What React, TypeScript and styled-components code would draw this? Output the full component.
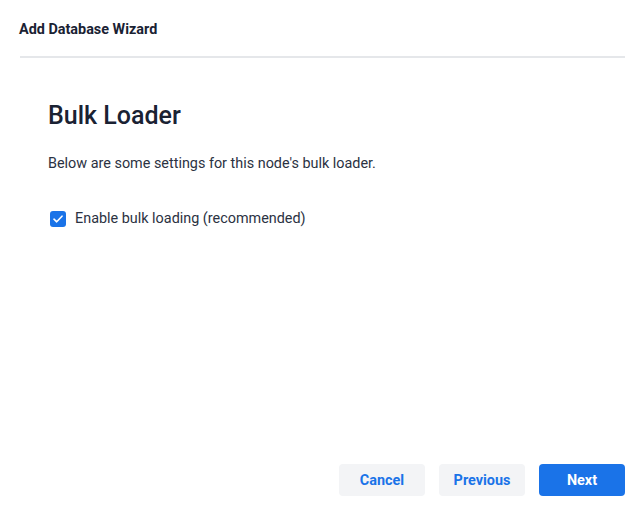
import React, { useState } from 'react'
import styled, { createGlobalStyle } from 'styled-components'

const GlobalStyle = createGlobalStyle`
  html, body {
    margin: 0;
    padding: 0;
    background: #ffffff;
  }
  body {
    font-family: Roboto, "Noto Sans", "Liberation Sans", sans-serif;
    color: #1a2233;
  }
`

const Wrapper = styled.div`
  width: 644px;
  height: 519px;
  padding: 0 19px 0 20px;
  box-sizing: border-box;
  display: flex;
  flex-direction: column;
`

const Header = styled.header`
  height: 54px;
  display: flex;
  align-items: center;
  border-bottom: solid 2px #e5e7ea;
  padding-top: 2px;
  box-sizing: content-box;
`

const HeaderTitle = styled.h1`
  margin: 0 0 0 -1px;
  font-size: 14.4px;
  font-weight: 700;
  color: #1a2233;
`

const Body = styled.main`
  flex: 1;
  padding: 42px 28px 0;
`

const Title = styled.h2`
  margin: 0;
  font-size: 25px;
  font-weight: 500;
  line-height: 32px;
  color: #1a2233;
`

const Description = styled.p`
  margin: 22px 0 0;
  font-size: 14.4px;
  line-height: 20px;
  color: #2b3242;
`

const CheckRow = styled.label`
  margin-top: 35px;
  display: flex;
  align-items: center;
  gap: 9px;
  padding-left: 2px;
  font-size: 14.4px;
  line-height: 20px;
  color: #2b3242;
  cursor: pointer;
`

const Box = styled.span<{ checked: boolean }>`
  width: 16px;
  height: 16px;
  border-radius: 3px;
  box-sizing: border-box;
  display: flex;
  align-items: center;
  justify-content: center;
  background: ${({ checked }) => (checked ? '#1a73e8' : '#ffffff')};
  border: ${({ checked }) => (checked ? 'none' : 'solid 1px #9aa1ab')};
`

const Footer = styled.footer`
  display: flex;
  justify-content: flex-end;
  gap: 14px;
  padding-bottom: 23px;
`

const Button = styled.button<{ primary?: boolean }>`
  width: 86px;
  height: 32px;
  border: none;
  border-radius: 4px;
  font-family: inherit;
  font-size: 14.4px;
  font-weight: 700;
  cursor: pointer;
  color: ${({ primary }) => (primary ? '#ffffff' : '#1a73e8')};
  background: ${({ primary }) => (primary ? '#1a73e8' : '#f3f4f6')};
`

const App: React.FC = () => {
  const [enabled, setEnabled] = useState(true)

  return (
    <>
      <GlobalStyle />
      <Wrapper>
        <Header>
          <HeaderTitle>Add Database Wizard</HeaderTitle>
        </Header>
        <Body>
          <Title>Bulk Loader</Title>
          <Description>Below are some settings for this node's bulk loader.</Description>
          <CheckRow onClick={() => setEnabled((prev) => !prev)}>
            <Box checked={enabled}>
              {enabled && (
                <svg width="10" height="8" viewBox="0 0 10 8" fill="none">
                  <path d="M1 4.2L3.7 6.8L9 1.2" stroke="#ffffff" strokeWidth="1.6" strokeLinecap="round" strokeLinejoin="round" />
                </svg>
              )}
            </Box>
            Enable bulk loading (recommended)
          </CheckRow>
        </Body>
        <Footer>
          <Button>Cancel</Button>
          <Button>Previous</Button>
          <Button primary>Next</Button>
        </Footer>
      </Wrapper>
    </>
  )
}

export default App
